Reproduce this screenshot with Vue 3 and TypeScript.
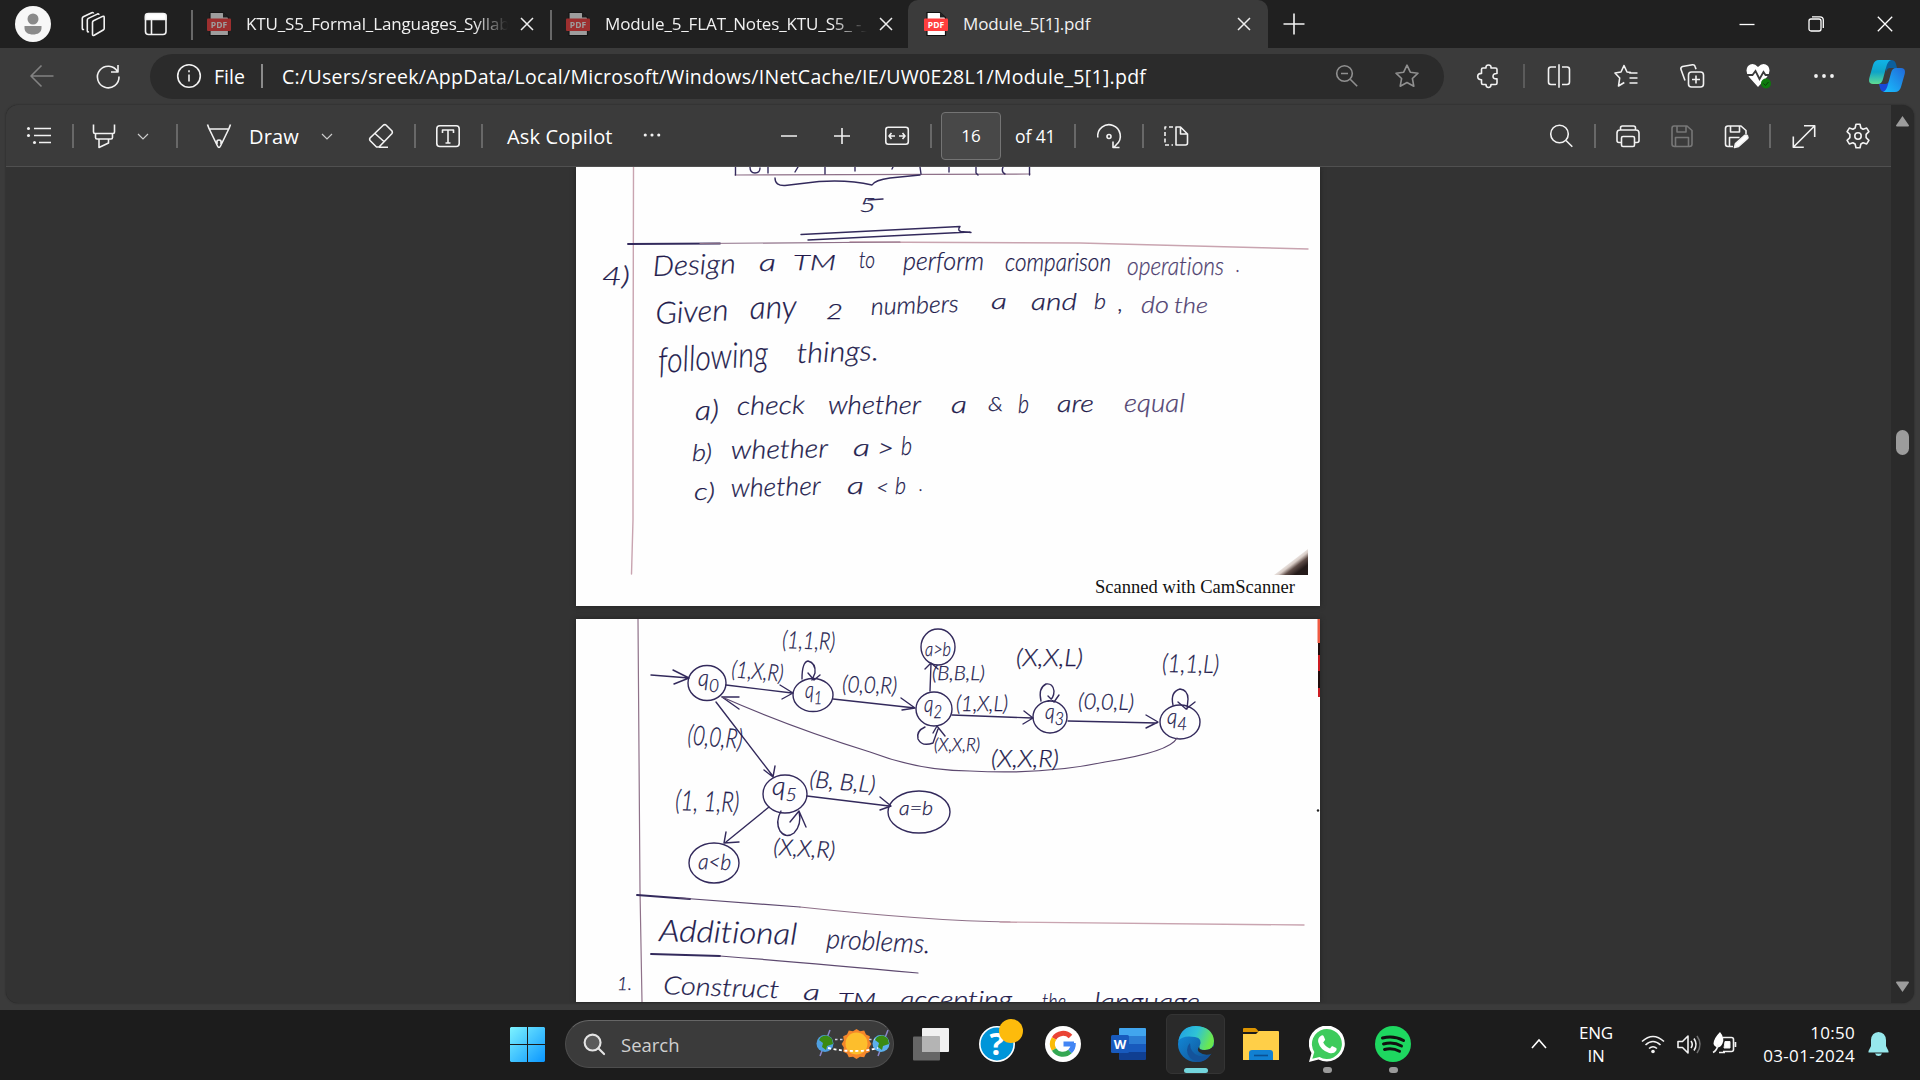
<script setup lang="ts">
interface Word { t: string; x: number; y: number; w: number; s: number; r?: number; sub?: string; c?: string }
interface Node { x: number; y: number; rx: number; ry: number }

const pageOne: Word[] = [
  { t: '5', x: 859, y: 212, w: 17, s: 20 },
  { t: '4)', x: 602, y: 285, w: 28, s: 26 },
  { t: 'Design', x: 653, y: 276, w: 83, s: 28, r: -2 },
  { t: 'a', x: 759, y: 271, w: 17, s: 24 },
  { t: 'TM', x: 793, y: 270, w: 43, s: 21 },
  { t: 'to', x: 859, y: 268, w: 16, s: 23 },
  { t: 'perform', x: 903, y: 270, w: 81, s: 26 },
  { t: 'comparison', x: 1005, y: 271, w: 106, s: 25 },
  { t: 'operations', x: 1127, y: 275, w: 97, s: 25, c: 'faint' },
  { t: '.', x: 1236, y: 272, w: 4, s: 22, c: 'faint' },
  { t: 'Given', x: 656, y: 324, w: 73, s: 30, r: -3 },
  { t: 'any', x: 750, y: 319, w: 47, s: 32, r: -2 },
  { t: '2', x: 826, y: 319, w: 17, s: 22 },
  { t: 'numbers', x: 871, y: 315, w: 88, s: 24, r: -2 },
  { t: 'a', x: 991, y: 309, w: 16, s: 22 },
  { t: 'and', x: 1031, y: 310, w: 46, s: 24 },
  { t: 'b', x: 1094, y: 309, w: 12, s: 22 },
  { t: ',', x: 1118, y: 311, w: 5, s: 22 },
  { t: 'do', x: 1141, y: 313, w: 28, s: 23, c: 'faint' },
  { t: 'the', x: 1174, y: 313, w: 34, s: 22, c: 'faint' },
  { t: 'following', x: 659, y: 373, w: 110, s: 35, r: -4 },
  { t: 'things.', x: 797, y: 363, w: 82, s: 28, r: -2 },
  { t: 'a)', x: 695, y: 420, w: 24, s: 27 },
  { t: 'check', x: 737, y: 415, w: 68, s: 26, r: -1 },
  { t: 'whether', x: 828, y: 414, w: 93, s: 25 },
  { t: 'a', x: 951, y: 413, w: 16, s: 23 },
  { t: '&', x: 988, y: 411, w: 15, s: 20 },
  { t: 'b', x: 1018, y: 413, w: 11, s: 26 },
  { t: 'are', x: 1057, y: 412, w: 37, s: 23 },
  { t: 'equal', x: 1124, y: 412, w: 61, s: 25, c: 'faint' },
  { t: 'b)', x: 692, y: 461, w: 20, s: 24 },
  { t: 'whether', x: 731, y: 459, w: 97, s: 26, r: -1 },
  { t: 'a', x: 853, y: 456, w: 17, s: 24 },
  { t: '>', x: 877, y: 457, w: 17, s: 25 },
  { t: 'b', x: 901, y: 455, w: 11, s: 26 },
  { t: 'c)', x: 694, y: 500, w: 21, s: 24 },
  { t: 'whether', x: 731, y: 497, w: 90, s: 26, r: -1.5 },
  { t: 'a', x: 847, y: 494, w: 17, s: 24 },
  { t: '<', x: 876, y: 495, w: 13, s: 22 },
  { t: 'b', x: 895, y: 494, w: 11, s: 24 },
  { t: '.', x: 919, y: 491, w: 4, s: 20 },
]

const pageTwo: Word[] = [
  { t: '(1,1,R)', x: 782, y: 648, w: 53, s: 24, r: 2 },
  { t: '(1,X,R)', x: 731, y: 677, w: 52, s: 23, r: 5 },
  { t: '(0,0,R)', x: 842, y: 692, w: 55, s: 23, r: 2 },
  { t: '(0,0,R)', x: 687, y: 744, w: 55, s: 27, r: 5 },
  { t: '(1, 1,R)', x: 675, y: 810, w: 64, s: 28, r: 2 },
  { t: '(B, B,L)', x: 809, y: 787, w: 66, s: 23, r: 5 },
  { t: '(X,X,R)', x: 773, y: 855, w: 62, s: 23, r: 3 },
  { t: '(X,X,L)', x: 1016, y: 666, w: 67, s: 23 },
  { t: '(1,1,L)', x: 1162, y: 672, w: 57, s: 25, r: 1 },
  { t: '(B,B,L)', x: 932, y: 680, w: 53, s: 19 },
  { t: '(1,X,L)', x: 956, y: 711, w: 52, s: 22 },
  { t: '(0,0,L)', x: 1078, y: 709, w: 56, s: 22, r: 1 },
  { t: '(X,X,R)', x: 934, y: 751, w: 46, s: 17 },
  { t: '(X,X,R)', x: 991, y: 767, w: 68, s: 23 },
  { t: 'q', sub: '0', x: 698, y: 686, w: 21, s: 23 },
  { t: 'q', sub: '1', x: 805, y: 698, w: 17, s: 23 },
  { t: 'q', sub: '2', x: 924, y: 712, w: 18, s: 23 },
  { t: 'q', sub: '3', x: 1045, y: 719, w: 19, s: 22 },
  { t: 'q', sub: '4', x: 1167, y: 724, w: 20, s: 22 },
  { t: 'q', sub: '5', x: 772, y: 795, w: 25, s: 25 },
  { t: 'a>b', x: 925, y: 656, w: 26, s: 20 },
  { t: 'a=b', x: 899, y: 815, w: 34, s: 20 },
  { t: 'a<b', x: 698, y: 869, w: 33, s: 22, r: 2 },
  { t: 'Additional', x: 659, y: 941, w: 138, s: 30, r: 1.5 },
  { t: 'problems.', x: 826, y: 948, w: 104, s: 27, r: 3 },
  { t: '1.', x: 617, y: 990, w: 15, s: 18 },
  { t: 'Construct', x: 663, y: 994, w: 116, s: 25, r: 2 },
  { t: 'a', x: 803, y: 1000, w: 17, s: 22 },
  { t: 'TM', x: 838, y: 1008, w: 38, s: 21 },
  { t: 'accepting', x: 900, y: 1008, w: 112, s: 23 },
  { t: 'the', x: 1042, y: 1010, w: 24, s: 23 },
  { t: 'language', x: 1094, y: 1011, w: 106, s: 26 },
]

const nodes: Node[] = [
  { x: 707, y: 683, rx: 19, ry: 17.5 },
  { x: 813, y: 695, rx: 20, ry: 16.5 },
  { x: 934, y: 709, rx: 18, ry: 17 },
  { x: 1050, y: 717, rx: 17, ry: 16 },
  { x: 1180, y: 722, rx: 20, ry: 17 },
  { x: 785, y: 794, rx: 22, ry: 19 },
  { x: 919, y: 812, rx: 31, ry: 21 },
  { x: 714, y: 863, rx: 25, ry: 20 },
  { x: 938, y: 647, rx: 17, ry: 18 },
]

const tabs = [
  { title: 'KTU_S5_Formal_Languages_Syllab', active: false, cls: 'first' },
  { title: 'Module_5_FLAT_Notes_KTU_S5_ -_', active: false, cls: 'second' },
  { title: 'Module_5[1].pdf', active: true, cls: 'third' },
]
const turn = (w: Word) => (w.r ? `rotate(${w.r} ${w.x} ${w.y})` : undefined)
</script>

<template>
  <div class="screen">
    <header class="tabbar">
      <svg class="i36" viewBox="0 0 36 36"><circle cx="18" cy="18" r="18" fill="#f7f7f7"/><circle cx="18" cy="13" r="5.500" fill="#8a8a8a"/><path d="M9.500 20h17v2c0 4.500-4 6.500-8.500 6.500s-8.500-2-8.500-6.500z" fill="#8a8a8a"/></svg>
      <svg class="ic" viewBox="0 0 24 24"><path d="M11.500 9.500q0-1 1-1.600l9-4.300q1.700-.7 1.700 1v11q0 1-1 1.600l-9 5.200q-1.700.8-1.700-1zM8 18.800q-1.700.8-1.700-1V7.200q0-1 1-1.600l9-4.300q1.500-.6 1.700.8M3 16.500q-1.700.8-1.700-1V5.500q0-1 1-1.600l8.500-4q1.500-.6 1.700.8" transform="translate(0 .8)"/></svg>
      <svg class="ic" viewBox="0 0 24 24"><rect x="1.500" y="2" width="20.500" height="20.500" rx="3"/><path d="M1.500 3.500q0-2 3-2h14.500q3 0 3 2V7.500h-20.500z" fill="#fff"/><path d="M7.500 7v15"/></svg>
      <div v-for="t in tabs" :key="t.title" class="tab" :class="[t.cls, { active: t.active }]">
        <svg class="pdf" viewBox="0 0 24 24"><path d="M3 .5h13l5.500 5V23.500H3z" fill="#fff" stroke="#111" stroke-width="1.200"/><path d="M16 .5v5h5.500z" fill="#222"/><rect x="0" y="6.500" width="24" height="12.500" rx="1" fill="#ff3e3e"/><text x="12" y="16" text-anchor="middle">PDF</text></svg>
        <span class="title">{{ t.title }}</span>
        <svg class="x" viewBox="0 0 14 14"><path d="M1 1l12 12M13 1L1 13"/></svg>
      </div>
      <svg class="ic plus" viewBox="0 0 24 24"><path d="M12 1.500v21M1.500 12h21"/></svg>
      <div class="winctl">
        <svg viewBox="0 0 16 16"><path d="M.5 8.500h15"/></svg>
        <svg viewBox="0 0 16 16"><rect x="1" y="3" width="12" height="12" rx="2"/><path d="M4 .8h8q3.300 0 3.300 3.300v8"/></svg>
        <svg viewBox="0 0 16 16"><path d="M.8.8l14.400 14.400M15.200.8L.8 15.200"/></svg>
      </div>
    </header>

    <div class="navbar">
      <svg class="ic dim" viewBox="0 0 24 24"><path d="M23.500 12H1M11.500 1.500L1 12l10.500 10.500"/></svg>
      <svg class="ic" viewBox="0 0 24 24"><path d="M21.500 7.500A10.800 10.800 0 1 0 23 12.500M22 1v7h-7"/></svg>
      <div class="address">
        <svg class="ic" viewBox="0 0 24 24"><circle cx="12" cy="12" r="11.300"/><path d="M12 10.500v7M12 6.300v1.900"/></svg>
        <span class="file">File</span>
        <i class="sep short"></i>
        <span class="url">C:/Users/sreek/AppData/Local/Microsoft/Windows/INetCache/IE/UW0E28L1/Module_5[1].pdf</span>
        <svg class="ic grey" viewBox="0 0 24 24"><circle cx="9.500" cy="9.500" r="7.800"/><path d="M15.200 15.200l7 7M6 9.500h7"/></svg>
        <svg class="ic grey" viewBox="0 0 24 24"><path d="M12 1.200l3.300 7 7.700 1-5.600 5.300 1.400 7.700L12 18.500l-6.800 3.700 1.400-7.700L1 9.200l7.700-1z"/></svg>
      </div>
      <svg class="ic" viewBox="0 0 24 24"><path d="M5.500 5.500Q5.500 4 7 4h3q-.4-3 2.500-3t2.500 3h4.500Q21 4 21 5.500v4q-4-.2-4 2.700t4 2.700V19q0 1.500-1.500 1.500H15q0 3-2.500 3t-2.500-3H7q-1.500 0-1.500-1.500v-3.200q-3.800 0-3.800-3.200t3.800-3.200z"/></svg>
      <i class="sep short grey-sep"></i>
      <svg class="ic" viewBox="0 0 24 24"><path d="M9 3H4Q1.500 3 1.500 5.500v12.500Q1.500 20.500 4 20.500H9M15 3h5q2.500 0 2.500 2.500v12.500q0 2.500-2.500 2.500H15M12 .3v23.400"/></svg>
      <svg class="ic" viewBox="0 0 24 24"><path d="M17 8.500l-4-.5-3-6.500-3 6.500-6 1 4.700 5-1.200 8 5.800-3.500M15 9h8.500M15.500 14h8M15.500 19h8"/></svg>
      <svg class="ic" viewBox="0 0 24 24"><rect x="8.500" y="8" width="15" height="15" rx="3"/><path d="M16 11.500v8M12 15.500h8M5 16.500L1 5.500q-.7-2 1.500-3L12.500.7q2-.2 2.500 1.500l1 3"/></svg>
      <svg class="heart" viewBox="0 0 26 26"><path d="M12 24L3 14Q-1.500 8 2 3q5-4.500 10 1 5-5.500 10-1 3.500 5-1 11z" fill="#fff" stroke="none"/><path d="M0 12h6.500l3-4 4 8 4-7 2 3H24" stroke="#3b3b3b" stroke-width="1.800"/><circle cx="20" cy="20.500" r="5" fill="#0e7a0d" stroke="none"/><path d="M17.500 20.500l2 2 3-3.500" stroke="#0b3d0a" stroke-width="1"/></svg>
      <svg class="ic dots" viewBox="0 0 24 24"><circle cx="4" cy="12" r="1.900"/><circle cx="12" cy="12" r="1.900"/><circle cx="20" cy="12" r="1.900"/></svg>
      <svg class="copilot" viewBox="0 0 36 32">
        <defs>
          <linearGradient id="cpa" x1="0" y1="0" x2="0" y2="1"><stop offset="0" stop-color="#10b3e8"/><stop offset=".5" stop-color="#0fa4c8"/><stop offset="1" stop-color="#5fdc93"/></linearGradient>
          <linearGradient id="cpb" x1="1" y1="0" x2="0" y2="1"><stop offset="0" stop-color="#2168d8"/><stop offset="1" stop-color="#18c2ff"/></linearGradient>
        </defs>
        <path d="M17 0h5q4 0 5 4l1 4h-7q-3 0-4 4z" fill="#0b5f9c"/><path d="M18 32h-2q-4 0-5-4l-1-4h6q3 0 4-3z" fill="#1747d6"/>
        <path d="M10 0h12q-3 1-4.500 6l-3.500 13q-1.200 5-5 5H4q-5 0-3.700-6L4 5Q5.500 0 10 0z" fill="url(#cpa)"/>
        <path d="M26 32H14q3-1 4.500-6L22 13q1.200-5 5-5h5q5 0 3.700 6L32 27q-1.500 5-6 5z" fill="url(#cpb)"/>
      </svg>
    </div>

    <main class="viewer">
      <div class="doc">
        <div class="pdfbar">
          <svg class="ic" viewBox="0 0 24 24"><path d="M7 4.500h17M7 11.500h17M12 18.500h12"/><g class="solid"><circle cx="1.500" cy="4.500" r="1.500"/><circle cx="1.500" cy="11.500" r="1.500"/><circle cx="7.500" cy="18.500" r="1.500"/></g></svg>
          <i class="sep"></i>
          <svg class="ic" viewBox="0 0 24 24"><path d="M1.500.5v7.500q0 1.500 1.500 1.500h18q1.500 0 1.500-1.500V.5M3.500 9.500v4q0 1.500 1.500 1.500h14q1.500 0 1.500-1.500v-4M7 15v8.500l9.500-4.500v-4"/></svg>
          <svg class="chev" viewBox="0 0 12 12"><path d="M1 4l5 5 5-5"/></svg>
          <i class="sep"></i>
          <svg class="ic" viewBox="0 0 24 24"><path d="M.5.500l1.500 4L10.500 22q1.500 3 3 0L22 4.500l1.500-4M2 5h20M10 20v-2.500q0-1.500 2-1.500t2 1.500V20"/></svg>
          <span class="lbl draw">Draw</span>
          <svg class="chev" viewBox="0 0 12 12"><path d="M1 4l5 5 5-5"/></svg>
          <svg class="ic" viewBox="0 0 24 24"><path d="M1 14L14.500 1q1.500-.8 2.500 0l6 6q.8 1.500 0 2.500L10 23H7.500L1 16.500q-.8-1.500 0-2.500zM6 9.500l9.500 8.500M10 23.200h9"/></svg>
          <i class="sep"></i>
          <svg class="ic" viewBox="0 0 24 24"><rect x=".8" y="1.800" width="22.400" height="20.700" rx="3"/><path d="M6.500 9V6h11v3M12 6v13M9.500 19h5"/></svg>
          <i class="sep"></i>
          <span class="lbl ask">Ask Copilot</span>
          <svg class="ic dots up" viewBox="0 0 24 24"><circle cx="3" cy="12" r="2.100"/><circle cx="12" cy="12" r="2.100"/><circle cx="21" cy="12" r="2.100"/></svg>
          <svg class="ic" viewBox="0 0 24 24"><path d="M4 12h16"/></svg>
          <svg class="ic" viewBox="0 0 24 24"><path d="M4 12h16M12 4v16"/></svg>
          <svg class="ic" viewBox="0 0 24 24"><rect x=".8" y="3.300" width="22.500" height="17" rx="2.500"/><path d="M10 12H4M6.500 9L4 12l2.500 3M14 12h6M17.500 9l2.500 3-2.500 3"/></svg>
          <i class="sep"></i>
          <div class="pagebox">16</div>
          <span class="lbl small">of 41</span>
          <i class="sep"></i>
          <svg class="ic" viewBox="0 0 24 24"><circle cx="12" cy="12.500" r="2"/><path d="M.8 13.500A11.300 11.300 0 1 1 19.500 20.500l-2.500 2.700M16 17.500v6h6.500"/></svg>
          <i class="sep"></i>
          <svg class="ic" viewBox="0 0 24 24"><path d="M12 3v18h9.500q2 0 2-2v-9L16.500 3zM16.500 3v7h7"/><path stroke-dasharray="4 2.500" d="M9 3H1v18h8"/></svg>
          <svg class="ic" viewBox="0 0 24 24"><circle cx="10.500" cy="10" r="8.800"/><path d="M17 16.500l6.300 6.300"/></svg>
          <i class="sep"></i>
          <svg class="ic" viewBox="0 0 24 24"><path d="M4.500 6V4q0-2 2-2h11q2 0 2 2v2M5 18.500H3q-2 0-2-2V9q0-3 3-3h16q3 0 3 3v7.500q0 2-2 2h-2"/><rect x="5.500" y="12.500" width="13" height="10" rx="1.500"/></svg>
          <svg class="ic faded" viewBox="0 0 24 24"><path d="M4 2h13l5 4.500V20q0 2.500-2.500 2.500h-15Q2 22.500 2 20V4.500Q2 2 4 2zM7 2v6h9V2M5.500 22v-8.500h13V22"/></svg>
          <svg class="ic" viewBox="0 0 24 24"><path d="M9 22.500H4Q1.500 22.500 1.500 20V4.500Q1.500 2 4 2h13l5 4.500V10M6.500 2v6h9V2M5.500 22v-8.500h10"/><path d="M10.500 23.500l1-4 9-8q2-1 3 .5t-.5 3l-8.500 7.500z" fill="#fff"/></svg>
          <i class="sep"></i>
          <svg class="ic" viewBox="0 0 24 24"><path d="M1.500 23L22.500 2M12 1.800h10.700V13M1.300 12.500v10.700h10.500"/></svg>
          <svg class="ic gear" viewBox="0 0 24 24"><path d="M10 .3h4l.9 3.700 2.200 1.300 3.600-1.200 2.200 3.600-2.800 2.700v3.200l2.800 2.700-2.200 3.600-3.600-1.200-2.200 1.300-.9 3.700h-4l-.9-3.700-2.200-1.300-3.600 1.200-2.200-3.600 2.800-2.700v-3.200L1.100 7.700l2.200-3.600 3.600 1.200L9.100 4z"/><circle cx="12" cy="12" r="3.200"/></svg>
        </div>

        <div class="pages">
          <svg class="page one" viewBox="576 167 744 439">
            <defs>
              <linearGradient id="thumb" x1="0" y1="0" x2="1" y2="1"><stop offset=".42" stop-color="#fff"/><stop offset=".56" stop-color="#d8ccc6"/><stop offset=".66" stop-color="#5e4c47"/><stop offset=".8" stop-color="#241a19"/></linearGradient>
            </defs>
            <path class="rose" d="M633.500 167L633 410 633 520 631.500 574"/>
            <path class="rose" d="M850 242L1080 243 1308 249"/>
            <path class="ink strong" d="M628 244L720 243.500"/><path class="mix" d="M700 243.500L900 242"/>
            <path class="mix" d="M735 175L1030 174"/>
            <path class="ink" d="M735.500 167v8M750 167q0 6 5 6t5-5M768 167v6M798 167l-3 5M825 167v7M855 167v4M893 167l-1 2M920 167l1 7M949 167v5M976 167v6l2 2M1003 167q-2 5 2 7M1029.500 167v8"/>
            <path class="ink" d="M775 178q0 8 10 7.500l34-4q30-2 53 3.500 3-5 18-7l30-3"/>
            <path class="ink" d="M801 234.500L960 226.500M808 240L970 232M960 226.500q-3 4 1 5l10 1"/>
            <path class="ink" d="M868 200l15-1"/>
            <text v-for="(w, i) in pageOne" :key="i" class="hand" :class="w.c" :x="w.x" :y="w.y" :font-size="w.s" :textLength="w.w" lengthAdjust="spacingAndGlyphs" :transform="turn(w)">{{ w.t }}</text>
            <path d="M1308 549v26h-34z" fill="url(#thumb)"/>
            <text x="1095" y="593" class="serif" textLength="200" lengthAdjust="spacingAndGlyphs">Scanned with CamScanner</text>
          </svg>

          <svg class="page two" viewBox="576 619 744 383">
            <path class="mix" d="M638 619L640 890 642 1002"/>
            <g class="ink">
              <ellipse v-for="(n, i) in nodes" :key="i" :cx="n.x" :cy="n.y" :rx="n.rx" :ry="n.ry"/>
              <path d="M651 675l38 3M673 670l16 8-15 6"/>
              <path d="M726 685l66 8M780 685l13 8-11 6"/>
              <path d="M802 679q0-17 6-18 8 2 7 12l-3 7M808 673l6 7 6-5"/>
              <path d="M833 699l82 9M901 698l14 10-13 2"/>
              <path d="M930 691l1-27M925 669l6-6 7 6"/>
              <path d="M952 715l80 3M1024 711l9 7-10 6"/>
              <path d="M925 727q-9 4-7 12 4 8 15 4l5-14M933 733l4-7 8 10"/>
              <path d="M1041 701q-3-13 5-17 7-1 8 7 0 8-6 10M1048 696l6 6 5-7"/>
              <path d="M1068 721l89 2M1146 715l12 7-12 6"/>
              <path d="M1173 705q-3-13 7-16 8 1 8 10l-1 10M1178 702l8 7 9-7"/>
              <path d="M716 702l56 73M764 770l9 7 2-11"/>
              <path d="M807 796l82 10M880 797l11 9-11 4"/>
              <path d="M769 807l-43 35M726 832l-2 11 15-1"/>
              <path d="M781 811q-6 11-1 20 6 8 14 2 8-8 5-22M790 822l9-11 7 16"/>
              <path d="M722 697l17 0M722 697l17 12"/>
            </g>
            <path class="mix dark" d="M722 697Q790 727 870 752 920 771 970 771 1045 775 1105 762 1170 752 1177 738"/>
            <path class="ink strong" d="M637 895L690 899"/><path class="mix dark" d="M680 898L800 907"/><path class="mix" d="M800 907Q930 921 1010 922"/><path class="rose" d="M1000 922L1304 925"/>
            <path class="ink strong" d="M651 954L720 956"/><path class="mix dark" d="M720 956Q800 962 918 973"/>
            <text v-for="(w, i) in pageTwo" :key="i" class="hand" :x="w.x" :y="w.y" :font-size="w.s" :textLength="w.w" lengthAdjust="spacingAndGlyphs" :transform="turn(w)">{{ w.t }}<tspan v-if="w.sub" dy="6" font-size="18">{{ w.sub }}</tspan></text>
            <path d="M1317.500 619h2.500v24h-2.500z" fill="#ef5a42"/><path d="M1318 643h2v12h-2zM1318 671h2v17h-2z" fill="#210c0c"/><path d="M1318 655h2v16h-2zM1318 688h2v9h-2z" fill="#cc1c22"/><circle cx="1318" cy="810.500" r="1.200" fill="#222"/>
          </svg>
        </div>
      </div>
      <div class="scroll">
        <svg viewBox="0 0 14 11"><path d="M7 0l6.500 9.500q0 1-1 1h-11q-1 0-1-1z"/></svg>
        <i></i>
        <svg viewBox="0 0 14 11"><path d="M7 11L.5 1.500q0-1 1-1h11q1 0 1 1z"/></svg>
      </div>
    </main>

    <footer class="taskbar">
      <svg class="start" viewBox="0 0 35 35"><defs><linearGradient id="win" x1="0" y1="0" x2="1" y2="1"><stop offset="0" stop-color="#7df3ff"/><stop offset="1" stop-color="#0a96ff"/></linearGradient></defs><path fill="url(#win)" d="M1 0h16v17H0V1zM18 0h16l1 1v16H18zM0 18h17v17H1l-1-1zM18 18h17v16l-1 1H18z"/></svg>
      <div class="search">
        <svg class="mag" viewBox="0 0 24 24"><circle cx="10" cy="10" r="8.300" fill="#5a5a5a"/><path d="M16 16l6 6"/></svg>
        <span>Search</span>
        <svg class="orbit" viewBox="0 0 74 32">
          <g stroke="#8a86c9" stroke-width="1.500"><path d="M14 2L4 28M72 2L62 28"/></g>
          <circle cx="9" cy="15.500" r="8.500" fill="#4f9fe0"/><path d="M5 9q6-4 11 2l1 5-6 2-1 4-4-3 1-4-4-3z" fill="#3b8a12"/>
          <path fill="#f5872a" d="M40.500 1l3.500 2.200 4.200-.6 1.800 3.800 3.800 1.800-.6 4.200 2.200 3.600-2.200 3.500.6 4.200-3.800 1.800-1.800 3.800-4.200-.6-3.500 2.300-3.500-2.300-4.200.6-1.800-3.800-3.800-1.800.6-4.200-2.200-3.500 2.200-3.600-.6-4.200 3.800-1.800 1.800-3.800 4.200.6z"/><circle cx="40.500" cy="15.500" r="11" fill="#fdbe2c"/>
          <circle cx="65" cy="15.500" r="8.500" fill="#5cb0ec"/><path d="M61 9q6-4 11 2l1 5-6 2-1 4-4-3 1-4-4-3z" fill="#3b8a12"/>
          <path d="M12 20q28 6 50 0" fill="none" stroke="#fff" stroke-width="1.800" stroke-dasharray="3 2.500"/><path d="M19 11.500h8M53 11.500h6" stroke="#ccd" stroke-width="1.600" stroke-dasharray="2.500 2.500"/>
        </svg>
      </div>
      <svg class="app" viewBox="0 0 36 36"><rect x="9" y="2" width="27" height="24" rx="1" fill="#f1f1f1"/><rect y="10.500" width="27" height="24" rx="1" fill="#6c6c6c" opacity=".93"/><path d="M9 10.500h18V26H9z" fill="#b4b4b4"/></svg>
      <svg class="app help" viewBox="0 0 44 44"><circle cx="18" cy="26" r="17.200" fill="#0095d9" stroke="#fff" stroke-width="1.600"/><text x="18" y="37" text-anchor="middle" class="qm">?</text><circle cx="32" cy="13" r="12" fill="#fdbb0c"/></svg>
      <svg class="app" viewBox="0 0 36 36"><circle cx="18" cy="18" r="18" fill="#fff"/><g fill="none" stroke-width="5"><path d="M9 12.500A10.500 10.500 0 0 1 25.500 10.500" stroke="#ea4335"/><path d="M9 12.500a10.500 10.500 0 0 0 0 11" stroke="#fbbc05"/><path d="M9 23.500A10.500 10.500 0 0 0 25 25.500" stroke="#34a853"/><path d="M25 25.500q3.500-3.500 3.300-8.500M18.500 18h10.500" stroke="#4285f4"/></g></svg>
      <svg class="app" viewBox="0 0 36 36"><rect x="8" y="2" width="27" height="8.500" rx="1" fill="#41a5ee"/><path fill="#2b7cd3" d="M8 10h27v8H8z"/><path fill="#185abd" d="M8 18h27v8H8z"/><path fill="#103f91" d="M8 26h27v7q0 1-1 1H9q-1 0-1-1z"/><rect y="9" width="18" height="18" rx="1.500" fill="#185abd"/><text x="9" y="23" text-anchor="middle" class="ww">W</text></svg>
      <div class="edge">
        <svg class="app" viewBox="0 0 36 36"><defs><linearGradient id="ea" x1="0" y1="0" x2="1" y2=".3"><stop offset="0" stop-color="#1f9de4"/><stop offset=".55" stop-color="#2fc3d6"/><stop offset="1" stop-color="#6be84f"/></linearGradient><linearGradient id="eb" x1="0" y1="0" x2="1" y2="1"><stop offset="0" stop-color="#1291e2"/><stop offset="1" stop-color="#114a8b"/></linearGradient></defs>
          <circle cx="18" cy="18" r="18" fill="url(#eb)"/><path d="M.5 15Q3 0 18 0q17 1 18 15 0 9-9 9-7 0-5.500-3.500Q25 12 17 11 4 9 .5 15z" fill="url(#ea)"/><path d="M12 17q0 10 9 13 7 1.500 12-2-5 8-13 8-11-3-11-12 0-4 3-7z" fill="#14539a"/><path d="M21.500 20.500Q20 24 27 24q5 0 8-3.500l3 1-4 6q-7 3-13-1.500-2.500-3 .5-5.500z" fill="#2a2a2a"/></svg>
        <b></b>
      </div>
      <svg class="app" viewBox="0 0 36 36"><path d="M0 3q0-1 1-1h11q1 0 2 1.500L16 6H0z" fill="#dc9400"/><path d="M0 8h13l3-3h19q1 0 1 1v28H0z" fill="#ffcf48"/><path d="M6 34V27q0-3 3-3h18q3 0 3 3v7z" fill="#1180d2"/><path d="M11 29.500h14" stroke="#0a4f92" stroke-width="1.600"/></svg>
      <div class="stack"><svg class="app" viewBox="0 0 36 36"><path d="M0 36l2.500-9A18 18 0 1 1 9.500 33.500z" fill="#fff"/><path d="M3.300 32.800l2-6.700A15 15 0 1 1 10.500 31z" fill="#3ecb5c"/><path d="M12.500 9.500q1.500-.8 2.200.8l1.500 3.500-2 2.700q2.500 4.500 6.800 6l2-2.500 4.200 2q1 .8 0 2.800-2.500 3.500-7 2.200-9-3-11-11-.8-4.500 3.300-6.500z" fill="#fff"/></svg><b></b></div>
      <div class="stack"><svg class="app" viewBox="0 0 36 36"><circle cx="18" cy="18" r="18" fill="#1ed760"/><path d="M7.500 12q11-3 21 2.500M8.500 18q10-2.500 18 2M9.500 23.500q8-2 15 1.800" fill="none" stroke="#111" stroke-width="3" stroke-linecap="round"/></svg><b></b></div>
      <svg class="up" viewBox="0 0 18 18"><path d="M2 13l7-8 7 8"/></svg>
      <div class="lang">ENG<br>IN</div>
      <svg class="ic" viewBox="0 0 24 24"><path d="M1 9.500q11-10 22 0M4.500 13q7.500-7 15 0M8 16.500q4-3.500 8 0"/><circle cx="12" cy="19.500" r="1.800" class="solid"/></svg>
      <svg class="ic" viewBox="0 0 24 24"><path d="M1 9.500h4.500L11 4v17l-5.500-5.500H1zM14 9q2.500 3.500 0 7M17 6.500q4 6 0 12"/><path d="M20 4q6 8.500 0 17" stroke="#6f6f6f"/></svg>
      <svg class="ic" viewBox="0 0 24 24"><path d="M11 5.500h8.500q2 0 2 2v10q0 2-2 2H11M23.500 10v5"/><path d="M13 9.500h5v6.500h-6z" fill="#fff" stroke-width="1"/><path d="M8 0q5 6 2.500 11.500Q9 15 6 15.500q-4-1-4.500-4Q2 6 8 0z" fill="#fff" stroke="none"/><path d="M1 20.500q4-2 5-8M7 20.500h6" /></svg>
      <div class="clock">10:50<br>03-01-2024</div>
      <svg class="bell" viewBox="0 0 21 24"><path d="M10.500 0Q17.500.5 18 8v6l2.500 5v1.500h-20V19L3 14V8Q3.500.5 10.500 0zM7 21.500h7q-1 2.500-3.500 2.500T7 21.500z" fill="#97e8ec"/></svg>
    </footer>
  </div>
</template>

<style>
html, body { background: #1c1c1c; overflow: hidden; }
</style>

<style scoped>
.screen { width: 1920px; height: 1080px; display: flex; flex-direction: column; background: #3b3b3b; color: #fff; font-family: "Open Sans", "Noto Sans", sans-serif; overflow: hidden; }
.tabbar, .navbar, .address, .pdfbar, .taskbar { display: grid; align-items: center; justify-items: start; box-sizing: border-box; white-space: nowrap; }
svg { display: block; }
.ic { width: 24px; height: 24px; fill: none; stroke: #f2f2f2; stroke-width: 1.6; stroke-linejoin: round; overflow: visible; }
.ic .solid, .ic.dots { fill: #f2f2f2; stroke: none; }
.ic.dim { stroke: #828282; }
.ic.grey { stroke: #909090; }
.ic.faded { stroke: #777; }
.ic.up { margin-top: -2px; }
.i36 { width: 36px; height: 36px; }
.sep { width: 2px; height: 24px; background: #686868; }
.sep.short { height: 24px; background: #8b8b8b; }
.sep.grey-sep { background: #5b5b5b; }

.tabbar { height: 48px; flex: none; background: #202020; padding-left: 15px; grid-template-columns: 66px 63px 47px 359px 358px 374px 1fr 166px; grid-template-rows: 48px; }
.tab { height: 48px; width: 100%; display: flex; align-items: center; box-sizing: border-box; padding-left: 16px; }
.tab.first, .tab.second { background: linear-gradient(#686868, #686868) 0 10px / 2px 30px no-repeat; }
.tab .pdf { width: 24px; height: 24px; flex: none; }
.pdf text { font: bold 8.5px "Open Sans", sans-serif; fill: #fff; }
.tab:not(.active) .pdf { opacity: .65; filter: brightness(.88); }
.tab .title { margin: -2px 0 0 15px; width: 262px; overflow: hidden; font-size: 17px; letter-spacing: -.13px; color: #f1f1f1; }
.tab:not(.active) .title { mask-image: linear-gradient(90deg, #000 228px, transparent 262px); }
.tab .x { width: 14px; height: 14px; margin-left: 12px; fill: none; stroke: #eee; stroke-width: 1.5; flex: none; }
.tab.active { width: 360px; background: #3b3b3b; border-radius: 10px 10px 0 0; }
.plus { margin-top: -1px; }
.winctl { display: flex; gap: 53px; justify-self: end; padding-right: 27px; }
.winctl svg { width: 16px; height: 16px; fill: none; stroke: #fff; stroke-width: 1.3; }

.navbar { height: 56px; flex: none; padding-left: 30px; grid-template-columns: 66px 54px 1326px 47px 24px 67px 66px 66px 66px 57px auto; }
.address { width: 1294px; height: 45px; border-radius: 23px; background: #2b2b2b; padding-left: 27px; grid-template-columns: 37px 47px 21px 1053px 60px auto; }
.file { font-size: 19.5px; letter-spacing: 0; }
.url { font-size: 19.5px; letter-spacing: .28px; }
.heart { width: 26px; height: 26px; fill: none; }
.copilot { width: 36px; height: 32px; }

.viewer { flex: none; height: 898px; margin: 1px 6px 0; display: flex; border-radius: 12px; overflow: hidden; background: #2b2b2b; box-shadow: 0 0 2px #222; }
.doc { width: 1885px; display: flex; flex-direction: column; background: #333; }
.pdfbar { height: 62px; flex: none; background: #3b3b3b; border-bottom: 1px solid #505050; padding-left: 21px; grid-template-columns: 45px 20px 45px 39px 31px 42px 72px 48px 45px 22px 45px 26px 136px 134px 53px 55px 45px 11px 74px 59px 23px 45px 22px 385px 45px 22px 54px 54px 45px 23px 54px auto; }
.chev { width: 12px; height: 12px; fill: none; stroke: #ccc; stroke-width: 1.2; }
.lbl { font-size: 20px; letter-spacing: .15px; padding-top: 1px; }
.lbl.small { font-size: 17.5px; letter-spacing: -.1px; padding-top: 0; }
.pagebox { width: 60px; height: 48px; box-sizing: border-box; border: 1px solid #747474; border-radius: 4px; background: #484848; display: flex; align-items: center; justify-content: center; font-size: 17px; }
.pages { flex: 1; display: flex; flex-direction: column; gap: 13px; padding-left: 570px; overflow: hidden; }
.page { width: 744px; background: #fefefe; flex: none; box-shadow: 0 0 5px #222; }
.page.one { height: 439px; }
.page.two { height: 383px; }
.hand { font-family: Lato, "Open Sans", sans-serif; font-style: italic; font-weight: 300; font-variant-ligatures: none; fill: #221a4c; stroke: #221a4c; stroke-width: .25; }
.hand.faint { fill: #4f4170; stroke: #4f4170; }
.serif { font: 19px "Liberation Serif", serif; fill: #111; }
.ink, .mix, .rose { fill: none; stroke: #332a5c; stroke-width: 1.4; stroke-linecap: round; stroke-linejoin: round; }
.mix { stroke: #8f7189; stroke-width: 1.2; }
.mix.dark { stroke: #5e4a70; }
.rose { stroke: #c9a4b0; }
.strong { stroke-width: 1.9; }
.scroll { flex: 1; display: flex; flex-direction: column; align-items: center; padding: 11px 0 11px; }
.scroll svg { width: 15px; height: 11px; fill: #9c9c9c; }
.scroll i { width: 13px; height: 25px; border-radius: 7px; background: #9c9c9c; margin: auto 0 526px; }

.taskbar { height: 70px; margin-top: 7px; flex: none; background: #1c1c1c; padding-left: 510px; grid-template-columns: 55px 348px 66px 66px 66px 55px 77px 66px 66px 155px 48px 63px 36px 35px 50px 106px auto; grid-template-rows: 68px; }
.start { width: 35px; height: 35px; }
.search { width: 329px; height: 48px; border-radius: 24px; background: #3b3b3b; border: 1px solid #4d4d4d; border-top-color: #666; box-sizing: border-box; display: flex; align-items: center; padding-left: 17px; }
.search .mag { width: 23px; height: 23px; fill: none; stroke: #e4e4e4; stroke-width: 2.2; stroke-linecap: round; }
.search span { margin-left: 15px; font-size: 18.5px; color: #d0d0d0; width: 195px; }
.orbit { width: 74px; height: 32px; flex: none; }
.app { width: 36px; height: 36px; }
.app.help { width: 44px; height: 44px; margin-top: -8px; }
.qm { font: bold 31px "Open Sans", sans-serif; fill: #fff; }
.ww { font: bold 13px "Open Sans", sans-serif; fill: #fff; }
.edge { width: 59px; height: 60px; border-radius: 6px; background: #2a2a2a; border: 1px solid #343434; box-sizing: border-box; display: flex; flex-direction: column; align-items: center; padding-top: 11px; }
.edge b { width: 24px; height: 5px; border-radius: 3px; background: #73d5dc; margin-top: 6px; }
.stack { height: 60px; box-sizing: border-box; display: flex; flex-direction: column; align-items: center; padding-top: 12px; }
.stack b { width: 9px; height: 6px; border-radius: 3px; background: #9a9a9a; margin-top: 5px; }
.up { width: 18px; height: 18px; fill: none; stroke: #fff; stroke-width: 1.6; }
.lang { width: 36px; text-align: center; font-size: 17px; line-height: 23px; letter-spacing: -.2px; }
.clock { width: 93px; display: block; text-align: right; font-size: 17px; line-height: 23px; letter-spacing: .3px; }
.bell { width: 21px; height: 24px; }
</style>
